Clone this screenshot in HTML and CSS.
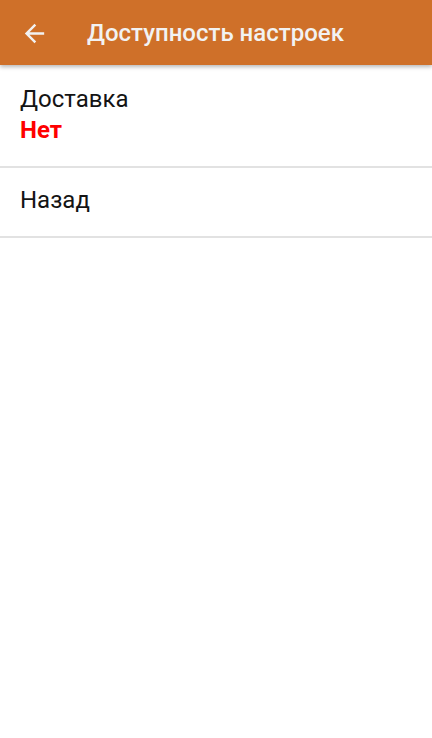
FILE: index.html
```html
<!DOCTYPE html>
<html lang="ru">
<head>
<meta charset="utf-8">
<title>Доступность настроек</title>
<link rel="stylesheet" href="styles.css">
</head>
<body>
<header class="appbar">
  <button class="back" aria-label="Назад">
    <svg viewBox="0 0 24 24"><path d="M20 11H7.83l5.59-5.59L12 4l-8 8 8 8 1.41-1.41L7.83 13H20v-2z" fill="#f2f2f2"/></svg>
  </button>
  <h1 class="title">Доступность настроек</h1>
</header>
<main class="list">
  <div class="item">
    <div class="label">Доставка</div>
    <div class="value">Нет</div>
  </div>
  <div class="item item-single">
    <div class="label">Назад</div>
  </div>
</main>
</body>
</html>
```
FILE: styles.css
```css
html, body {
  margin: 0;
  padding: 0;
  background: #ffffff;
  font-family: Roboto, "Noto Sans", sans-serif;
}
.appbar {
  height: 65px;
  background: #cf7029;
  display: flex;
  align-items: center;
  box-shadow: 0 2px 4px rgba(0,0,0,0.28);
  position: relative;
}
.back {
  width: 29px;
  height: 29px;
  margin-left: 20px;
  margin-top: 2px;
  padding: 0;
  border: 0;
  background: none;
  display: flex;
  align-items: center;
  justify-content: center;
}
.back svg {
  width: 29px;
  height: 29px;
}
.title {
  margin: 0 0 0 38px;
  font-size: 24px;
  line-height: 28px;
  font-weight: 500;
  color: #f2f2f2;
}
.list {
  display: flex;
  flex-direction: column;
}
.item {
  padding: 20px 20px 22px 20px;
  border-bottom: 2px solid #e2e2e2;
}
.item-single {
  padding: 18px 20px 22px 20px;
}
.label {
  font-size: 24px;
  color: #141414;
  line-height: 28px;
}
.value {
  margin-top: 3px;
  font-size: 24px;
  font-weight: 700;
  color: #ff0000;
  line-height: 28px;
}
```
